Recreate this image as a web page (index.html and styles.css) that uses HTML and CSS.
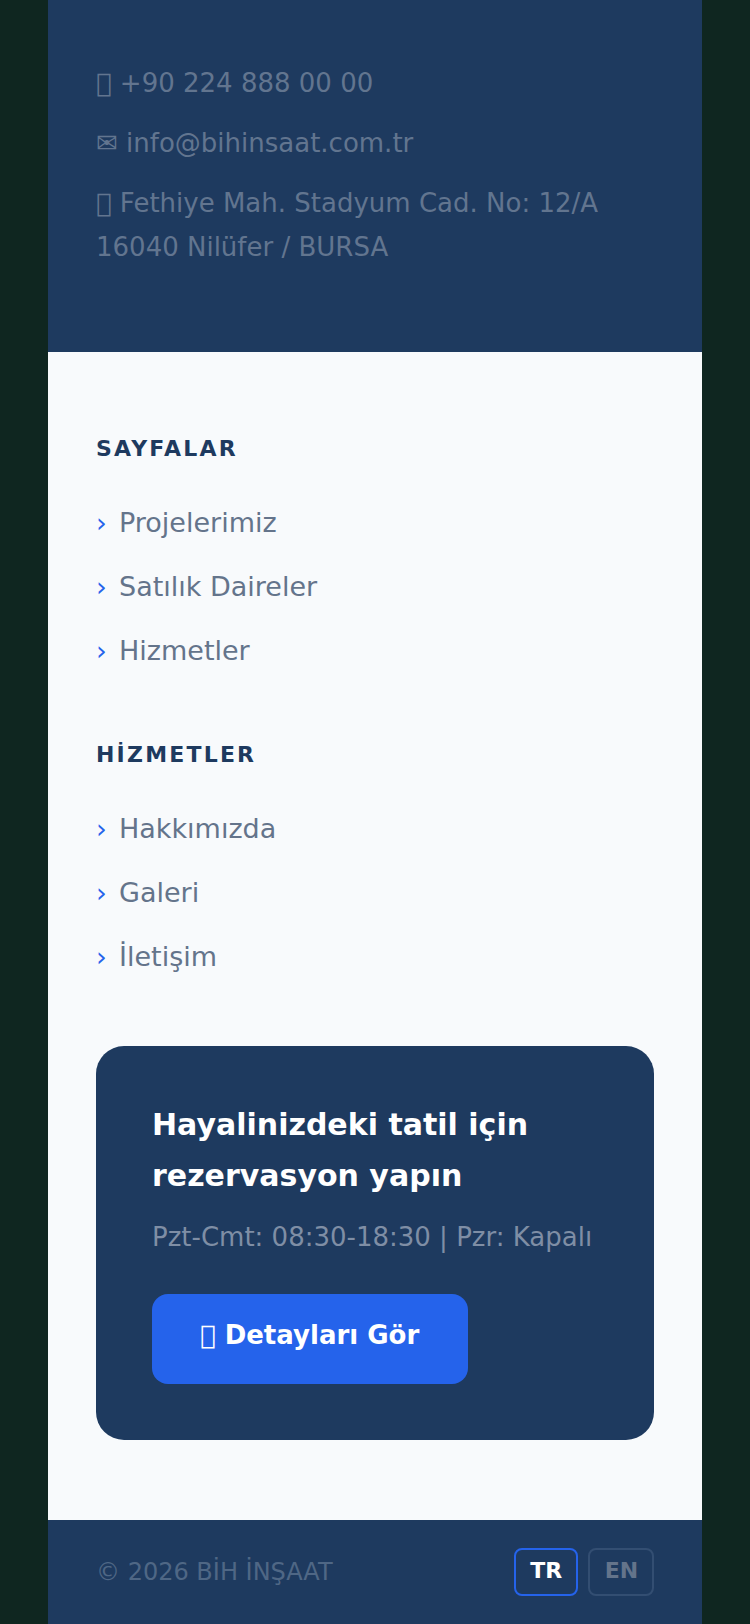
FILE: index.html
```html
<!DOCTYPE html>
<html lang="en">
<head>
    <meta charset="UTF-8">
    <meta name="viewport" content="width=device-width, initial-scale=1.0">
    <title>BİH İNŞAAT</title>
    <link rel="stylesheet" href="styles.css">
</head>
<body>
    <div class="page">
        <!-- Contact block -->
        <section class="contact">
            <p>&#xE000; +90 224 888 00 00</p>
            <p>✉ info@bihinsaat.com.tr</p>
            <p>&#xE000; Fethiye Mah. Stadyum Cad. No: 12/A<br>16040 Nilüfer / BURSA</p>
        </section>

        <section class="links">
            <h4>SAYFALAR</h4>
            <ul>
                <li><span class="arrow">›</span>Projelerimiz</li>
                <li><span class="arrow">›</span>Satılık Daireler</li>
                <li><span class="arrow">›</span>Hizmetler</li>
            </ul>

            <h4>HİZMETLER</h4>
            <ul>
                <li><span class="arrow">›</span>Hakkımızda</li>
                <li><span class="arrow">›</span>Galeri</li>
                <li><span class="arrow">›</span>İletişim</li>
            </ul>

            <div class="cta">
                <h3>Hayalinizdeki tatil için rezervasyon yapın</h3>
                <p>Pzt-Cmt: 08:30-18:30 | Pzr: Kapalı</p>
                <a class="cta-btn">&#xE000; Detayları Gör</a>
            </div>
        </section>

        <footer class="bottom">
            <span class="copy">© 2026 BİH İNŞAAT</span>
            <div class="langs">
                <a class="lang active">TR</a>
                <a class="lang">EN</a>
            </div>
        </footer>
    </div>
</body>
</html>
```

FILE: styles.css
```css
* { box-sizing: border-box; }
html, body { margin: 0; padding: 0; }
body {
    background: #0f2620;
    font-family: "DejaVu Sans", sans-serif;
    line-height: 1.7;
}
.page {
    width: 654px;
    height: 1624px;
    margin: 0 auto;
    overflow: hidden;
    background: #f8fafc;
    display: flex;
    flex-direction: column;
}

/* Contact block */
.contact {
    background: #1e3a5f;
    padding: 61px 48px 67px;
    color: #62758f;
    font-size: 26px;
    line-height: 44px;
}
.contact p { margin: 0 0 16px; }

/* Link columns */
.links {
    flex: 1;
    padding: 78px 48px 0;
}
.links h4 {
    margin: 0 0 33px;
    color: #1e3a5f;
    font-size: 22px;
    letter-spacing: 0.1em;
    font-weight: 700;
}
.links ul { list-style: none; margin: 0 0 62px; padding: 0; }
.links li {
    color: #64748b;
    font-size: 27px;
    margin-bottom: 18px;
}
.arrow { color: #2563eb; display: inline-block; width: 23px; }

.cta {
    background: #1e3a5f;
    border-radius: 28px;
    margin-top: 66px;
    padding: 53px 56px 56px;
}
.cta h3 {
    margin: 0 0 14px;
    color: #fff;
    font-size: 30px;
    font-weight: 700;
}
.cta p {
    margin: 0 0 35px;
    color: #7f8ea5;
    font-size: 26px;
}
.cta-btn {
    display: inline-block;
    padding: 19px 49px 26.8px 48px;
    background: #2563eb;
    border-radius: 16px;
    color: #fff;
    font-weight: 700;
    font-size: 26px;
}

/* Bottom bar */
.bottom {
    flex-shrink: 0;
    background: #1e3a5f;
    height: 104px;
    padding: 28px 48px 0;
    display: flex;
    justify-content: space-between;
    align-items: flex-start;
}
.copy { color: #4f6785; font-size: 24px; line-height: 48px; }
.langs { display: flex; gap: 10px; }
.lang {
    height: 48px;
    padding: 0 13.75px 0 14.75px;
    border: 2px solid #334e72;
    border-radius: 8px;
    color: #64748b;
    font-weight: 700;
    font-size: 22px;
    line-height: 42px;
    text-align: center;
}
.lang.active { border-color: #2563eb; color: #fff; }
```
